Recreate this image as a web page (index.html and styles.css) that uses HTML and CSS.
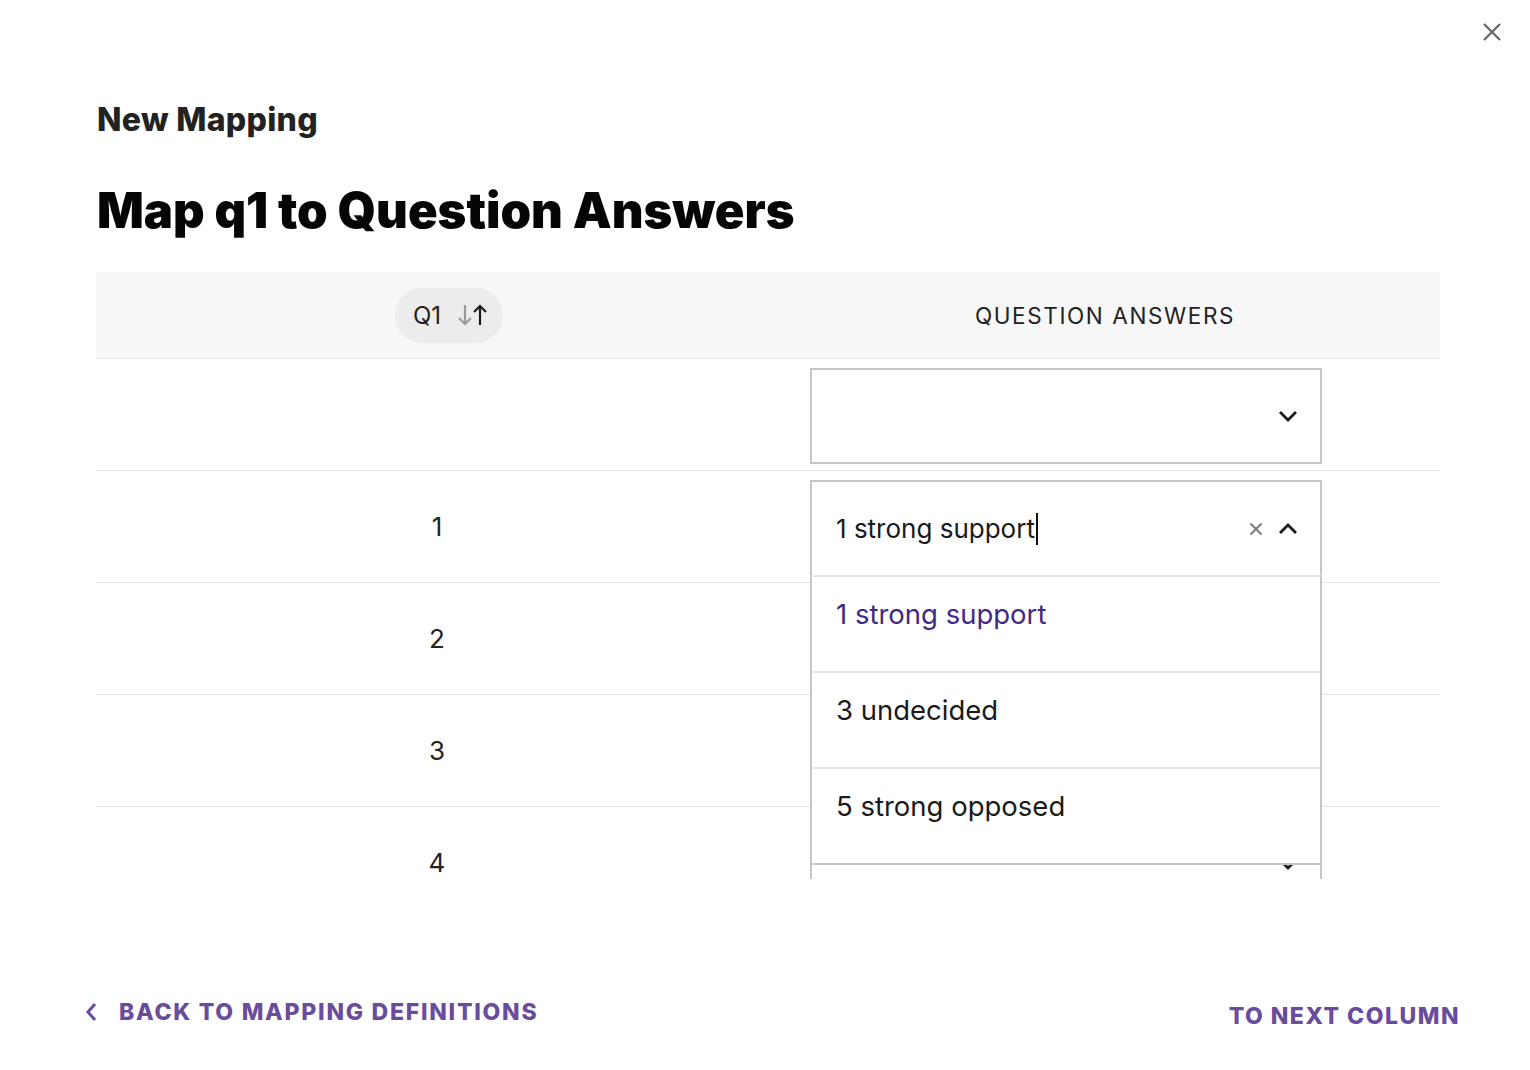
FILE: index.html
```html
<!DOCTYPE html>
<html lang="en">
<head>
<meta charset="utf-8">
<title>New Mapping</title>
<link rel="stylesheet" href="styles.css">
</head>
<body>
<div class="modal">
  <div class="topbar">
    <button class="close" aria-label="Close">
      <svg width="20" height="20" viewBox="0 0 20 20"><path d="M2 2L18 18M18 2L2 18" stroke="#666" stroke-width="2.2" fill="none"/></svg>
    </button>
  </div>
  <div class="content">
    <h2 class="subtitle">New Mapping</h2>
    <h1 class="title">Map q1 to Question Answers</h1>

    <div class="table">
      <div class="row head">
        <div class="cell c1">
          <span class="pill">Q1
            <svg width="32" height="26" viewBox="0 0 32 26">
              <path d="M8 3V22M2 16L8 22L14 16" stroke="#9a9a9a" stroke-width="2.2" fill="none"/>
              <path d="M23 23V4M17 10L23 4L29 10" stroke="#1a1a1a" stroke-width="2.2" fill="none"/>
            </svg>
          </span>
        </div>
        <div class="cell c2"><span class="colhead">QUESTION ANSWERS</span></div>
      </div>

      <div class="row">
        <div class="cell c1"></div>
        <div class="cell c2">
          <div class="select">
            <span class="value"></span>
            <svg class="chev" width="22" height="14" viewBox="0 0 22 14"><path d="M3 3L11 11L19 3" stroke="#1a1a1a" stroke-width="2.8" fill="none"/></svg>
          </div>
        </div>
      </div>

      <div class="row">
        <div class="cell c1"><span class="num">1</span></div>
        <div class="cell c2">
          <div class="combo">
            <div class="select open">
              <span class="value typed">1 strong support<span class="caret"></span></span>
              <svg class="clear" width="14" height="14" viewBox="0 0 14 14"><path d="M1.5 1.5L12.5 12.5M12.5 1.5L1.5 12.5" stroke="#777" stroke-width="1.8" fill="none"/></svg>
              <svg class="chev" width="22" height="14" viewBox="0 0 22 14"><path d="M3 11L11 3L19 11" stroke="#1a1a1a" stroke-width="2.8" fill="none"/></svg>
            </div>
            <ul class="menu">
              <li class="active">1 strong support</li>
              <li>3 undecided</li>
              <li>5 strong opposed</li>
            </ul>
          </div>
        </div>
      </div>

      <div class="row">
        <div class="cell c1"><span class="num">2</span></div>
        <div class="cell c2">
          <div class="select"><span class="value"></span>
            <svg class="chev" width="22" height="14" viewBox="0 0 22 14"><path d="M3 3L11 11L19 3" stroke="#1a1a1a" stroke-width="2.8" fill="none"/></svg>
          </div>
        </div>
      </div>

      <div class="row">
        <div class="cell c1"><span class="num">3</span></div>
        <div class="cell c2">
          <div class="select"><span class="value"></span>
            <svg class="chev" width="22" height="14" viewBox="0 0 22 14"><path d="M3 3L11 11L19 3" stroke="#1a1a1a" stroke-width="2.8" fill="none"/></svg>
          </div>
        </div>
      </div>

      <div class="row">
        <div class="cell c1"><span class="num">4</span></div>
        <div class="cell c2">
          <div class="select"><span class="value"></span>
            <svg class="chev" width="22" height="14" viewBox="0 0 22 14"><path d="M3 3L11 11L19 3" stroke="#1a1a1a" stroke-width="2.8" fill="none"/></svg>
          </div>
        </div>
      </div>
    </div>
  </div>

  <div class="footer">
    <button class="link back">
      <svg width="14" height="22" viewBox="0 0 14 22"><path d="M11 3L4 11L11 19" stroke="#6a4c9c" stroke-width="3" fill="none"/></svg>
      BACK TO MAPPING DEFINITIONS
    </button>
    <button class="link next">TO NEXT COLUMN</button>
  </div>
</div>
</body>
</html>
```

FILE: styles.css
```css
* { box-sizing: border-box; }
html, body { margin: 0; padding: 0; background: #fff; }
body {
  font-family: Inter, "Liberation Sans", sans-serif;
  color: #1f1f1f;
  width: 1530px;
  height: 1070px;
  overflow: hidden;
}
.modal {
  display: flex;
  flex-direction: column;
  height: 1070px;
}
.topbar {
  display: flex;
  justify-content: flex-end;
  padding: 22px 28px 0 0;
  height: 60px;
}
.close {
  background: none;
  border: 0;
  padding: 0;
  width: 20px;
  height: 20px;
  cursor: pointer;
}
.content {
  padding: 0 90px 0 96px;
}
.subtitle {
  margin: 41px 0 0 1px;
  font-size: 32px;
  line-height: 38px;
  font-weight: 800;
  color: #222;
  letter-spacing: 0.3px;
}
.title {
  margin: 43px 0 0 1px;
  font-size: 49px;
  line-height: 58px;
  font-weight: 900;
  color: #050505;
  letter-spacing: 0;
}
.table {
  margin-top: 32px;
  height: 607px;
  overflow: hidden;
}
.row {
  display: grid;
  grid-template-columns: 682px 662px;
  height: 112px;
  border-bottom: 1px solid #e6e6e6;
}
.row.head {
  height: 87px;
  background: #f7f7f7;
  border-bottom: 1px solid #e3e3e3;
}
.cell {
  display: flex;
  align-items: center;
}
.c1 { justify-content: center; }
.head .c1 { padding-left: 24px; }
.pill {
  display: inline-flex;
  align-items: center;
  gap: 16px;
  height: 55px;
  padding: 0 14px 0 18px;
  border-radius: 28px;
  background: #ececec;
  font-size: 24px;
  color: #222;
}
.colhead {
  font-size: 22.5px;
  letter-spacing: 1.6px;
  color: #222;
}
.num {
  font-size: 26px;
  color: #222;
}
.c2 { align-items: flex-start; padding: 9px 0 0 32px; }
.head .c2 {
  align-items: center;
  justify-content: center;
  padding: 0 8px 0 0;
}
.combo {
  position: relative;
  width: 512px;
  z-index: 2;
}
.select {
  width: 512px;
  height: 96px;
  border: 2px solid #c6c6c6;
  background: #fff;
  display: flex;
  align-items: center;
  padding: 0 21px 0 24px;
  gap: 14px;
}
.value {
  flex: 1;
  font-size: 26px;
  color: #1a1a1a;
  display: flex;
  align-items: center;
}
.caret {
  display: inline-block;
  width: 2px;
  height: 32px;
  background: #111;
  margin-left: 1px;
}
.chev { flex: none; }
.clear { flex: none; }
.select.open { border-bottom: 0; height: 95px; }
.menu {
  position: absolute;
  left: 0;
  top: 95px;
  width: 512px;
  margin: 0;
  padding: 0;
  list-style: none;
  background: #fff;
  border: 2px solid #c6c6c6;
  border-top: 2px solid #e6e6e6;
}
.menu li {
  height: 96px;
  padding: 20px 24px 0;
  font-size: 27.5px;
  color: #1a1a1a;
  border-bottom: 2px solid #e6e6e6;
}
.menu li:last-child { border-bottom: 0; height: 94px; }
.menu li.active { color: #3f2a86; }
.footer {
  margin-top: auto;
  display: flex;
  justify-content: space-between;
  align-items: flex-start;
  padding: 0 70px 40px 84px;
}
.link {
  background: none;
  border: 0;
  padding: 0;
  font-family: Inter, "Liberation Sans", sans-serif;
  font-size: 23px;
  font-weight: 800;
  letter-spacing: 1.75px;
  color: #6a4c9c;
  display: inline-flex;
  align-items: center;
  gap: 21px;
  cursor: pointer;
}
.next { margin-top: 4px; letter-spacing: 1.5px; }
```
